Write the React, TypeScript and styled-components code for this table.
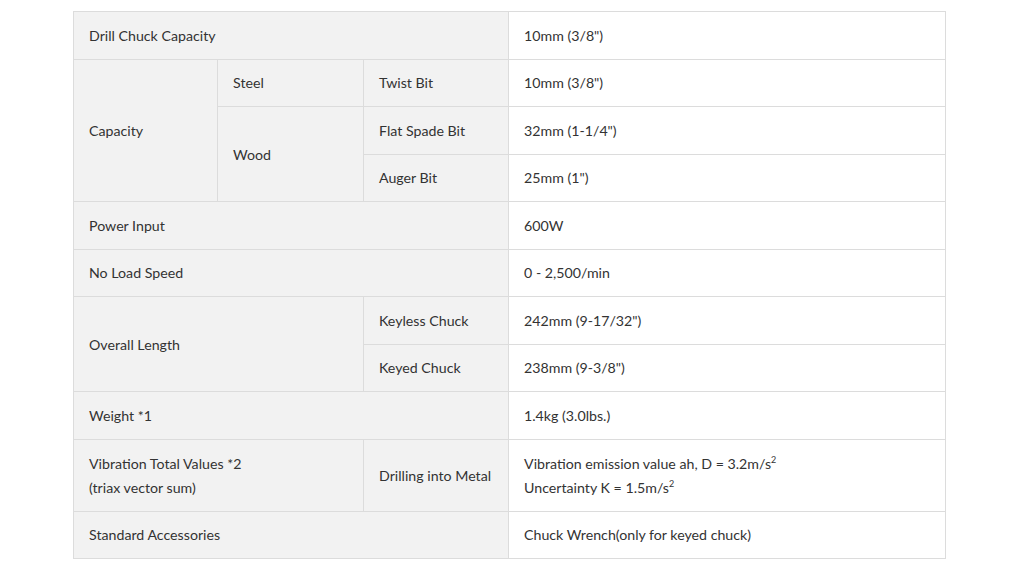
import React from "react";
import styled, { createGlobalStyle } from "styled-components";

const Global = createGlobalStyle`
  html, body { margin: 0; padding: 0; background: #ffffff; }
  body { font-family: Lato, "Liberation Sans", sans-serif; }
`;

const Page = styled.div`
  padding: 11px 79px 0 73px;
`;

const Table = styled.table`
  width: 872px;
  border-collapse: collapse;
  table-layout: fixed;
  font-family: Lato, "Liberation Sans", sans-serif;
  font-size: 14.2px;
  line-height: 24px;
  color: #333333;
`;

const Row = styled.tr<{ $tall?: boolean }>`
  height: ${(p) => (p.$tall ? "72px" : "47.5px")};
`;

const Head = styled.th<{ $shift?: number }>`
  background: #f2f2f2;
  border: 1px solid #dcdcdc;
  font-weight: 400;
  text-align: left;
  vertical-align: middle;
  white-space: nowrap;
  padding: ${(p) => p.$shift ?? 1}px 6px 0 15px;
`;

const Cell = styled.td<{ $shift?: number }>`
  background: #ffffff;
  border: 1px solid #dcdcdc;
  text-align: left;
  vertical-align: middle;
  padding: ${(p) => p.$shift ?? 1}px 6px 0 15px;
`;

const Sup = styled.sup`
  font-size: 9px;
  line-height: 0;
  vertical-align: 6px;
`;

export default function App() {
  return (
    <>
      <Global />
      <Page>
        <Table>
          <colgroup>
            <col style={{ width: 144 }} />
            <col style={{ width: 146 }} />
            <col style={{ width: 145 }} />
            <col style={{ width: 437 }} />
          </colgroup>
          <tbody>
            <Row>
              <Head colSpan={3}>Drill Chuck Capacity</Head>
              <Cell>10mm (3/8")</Cell>
            </Row>
            <Row>
              <Head rowSpan={3}>Capacity</Head>
              <Head>Steel</Head>
              <Head>Twist Bit</Head>
              <Cell>10mm (3/8")</Cell>
            </Row>
            <Row>
              <Head rowSpan={2}>Wood</Head>
              <Head>Flat Spade Bit</Head>
              <Cell>32mm (1-1/4")</Cell>
            </Row>
            <Row>
              <Head>Auger Bit</Head>
              <Cell>25mm (1")</Cell>
            </Row>
            <Row>
              <Head colSpan={3}>Power Input</Head>
              <Cell>600W</Cell>
            </Row>
            <Row>
              <Head colSpan={3}>No Load Speed</Head>
              <Cell>0 - 2,500/min</Cell>
            </Row>
            <Row>
              <Head colSpan={2} rowSpan={2}>Overall Length</Head>
              <Head>Keyless Chuck</Head>
              <Cell>242mm (9-17/32")</Cell>
            </Row>
            <Row>
              <Head>Keyed Chuck</Head>
              <Cell>238mm (9-3/8")</Cell>
            </Row>
            <Row>
              <Head colSpan={3}>Weight *1</Head>
              <Cell>1.4kg (3.0lbs.)</Cell>
            </Row>
            <Row $tall>
              <Head colSpan={2} $shift={2}>
                Vibration Total Values *2
                <br />
                (triax vector sum)
              </Head>
              <Head $shift={2}>Drilling into Metal</Head>
              <Cell $shift={2}>
                Vibration emission value ah, D = 3.2m/s<Sup>2</Sup>
                <br />
                Uncertainty K = 1.5m/s<Sup>2</Sup>
              </Cell>
            </Row>
            <Row>
              <Head colSpan={3}>Standard Accessories</Head>
              <Cell>Chuck Wrench(only for keyed chuck)</Cell>
            </Row>
          </tbody>
        </Table>
      </Page>
    </>
  );
}
